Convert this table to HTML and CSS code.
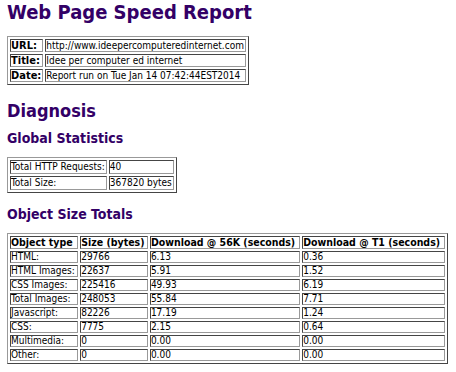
FILE: index.html
```html
<!DOCTYPE html>
<html lang="en">
<head>
  <meta charset="UTF-8">
  <title>Web Page Speed Report</title>
  <link rel="stylesheet" href="styles.css">
</head>
<body>

<h1>Web Page Speed Report</h1>

<table class="report info">
  <tr><th>URL:</th><td>http://www.ideepercomputeredinternet.com</td></tr>
  <tr><th>Title:</th><td>Idee per computer ed internet</td></tr>
  <tr><th>Date:</th><td>Report run on Tue Jan 14 07:42:44EST2014</td></tr>
</table>

<h2>Diagnosis</h2>

<h3>Global Statistics</h3>
<table class="report stats">
  <tr><td>Total HTTP Requests:</td><td>40</td></tr>
  <tr><td>Total Size:</td><td>367820 bytes</td></tr>
</table>

<h3 class="spaced">Object Size Totals</h3>
<table class="report totals">
  <tr>
    <th>Object type</th>
    <th>Size (bytes)</th>
    <th>Download @ 56K (seconds)</th>
    <th>Download @ T1 (seconds)</th>
  </tr>
  <tr><td>HTML:</td><td>29766</td><td>6.13</td><td>0.36</td></tr>
  <tr><td>HTML Images:</td><td>22637</td><td>5.91</td><td>1.52</td></tr>
  <tr><td>CSS Images:</td><td>225416</td><td>49.93</td><td>6.19</td></tr>
  <tr><td>Total Images:</td><td>248053</td><td>55.84</td><td>7.71</td></tr>
  <tr><td>Javascript:</td><td>82226</td><td>17.19</td><td>1.24</td></tr>
  <tr><td>CSS:</td><td>7775</td><td>2.15</td><td>0.64</td></tr>
  <tr><td>Multimedia:</td><td>0</td><td>0.00</td><td>0.00</td></tr>
  <tr><td>Other:</td><td>0</td><td>0.00</td><td>0.00</td></tr>
</table>

</body>
</html>
```

FILE: styles.css
```css
body {
  font-family: "DejaVu Sans Condensed", "DejaVu Sans", Verdana, sans-serif;
  background: #fff;
  color: #000;
  margin: 0 7px;
}
h1, h2, h3 {
  color: #330066;
  font-weight: bold;
  margin: 0;
}
h1 {
  font-size: 20px;
  line-height: 24px;
  margin-bottom: 12px;
}
h2 {
  font-size: 18px;
  line-height: 22px;
  margin: 15px 0 7px;
}
h3 {
  font-size: 14px;
  line-height: 18px;
  margin-bottom: 10px;
}
h3.spaced {
  margin-top: 12px;
}

/* border="1" look: raised frame, sunken cells */
.report {
  border: 1px outset #999;
  border-spacing: 2px;
  font-size: 10px;
}
.report th, .report td {
  border: 1px inset #999;
  padding: 0 1px 0 0;
  text-align: left;
  white-space: nowrap;
}
.report th {
  font-size: 10.5px;
}
.info th {
  font-size: 11px;
}
.info th, .info td {
  line-height: 11px;
}
.stats td {
  line-height: 12px;
}
.totals {
  width: 441px;
}
.totals th {
  line-height: 11px;
}
.totals td {
  line-height: 10px;
}
```
